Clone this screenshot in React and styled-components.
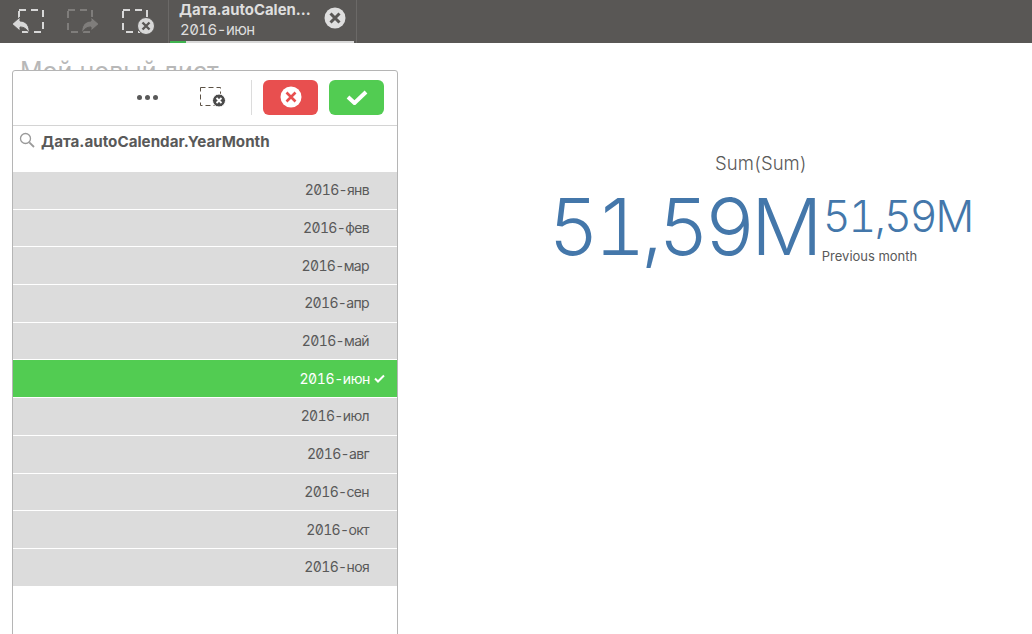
import React from 'react';
import styled, { createGlobalStyle } from 'styled-components';

const GlobalStyle = createGlobalStyle`
  html, body { margin: 0; padding: 0; height: 100%; overflow: hidden; background: #fff; }
  body { font-family: "Inter", "Noto Sans", sans-serif; }
`;

const Page = styled.div`
  width: 1032px;
  height: 634px;
  display: flex;
  flex-direction: column;
  overflow: hidden;
`;

const TopBar = styled.div`
  height: 43px;
  background: #595755;
  display: flex;
  align-items: stretch;
  flex: none;
`;

const ToolIcons = styled.div`
  width: 168px;
  display: flex;
  align-items: center;
  padding-left: 11px;
  gap: 17px;
  box-sizing: border-box;
`;

const ToolIcon = styled.svg`
  width: 38px;
  height: 43px;
  display: block;
`;

const SelectionTab = styled.div`
  width: 189px;
  box-sizing: border-box;
  border-left: 1px solid #6b6967;
  border-right: 1px solid #6b6967;
  position: relative;
  padding: 2px 0 0 11px;
  color: #dedede;
`;

const TabTitle = styled.div`
  font-size: 14.9px;
  font-weight: 700;
  line-height: 17px;
  white-space: nowrap;
  margin-left: -1px;
`;

const TabValue = styled.div`
  font-size: 15px;
  line-height: 21px;
  font-feature-settings: "zero", "tnum";
  letter-spacing: -0.55px;
`;

const TabClose = styled.svg`
  position: absolute;
  left: 155px;
  top: 7px;
  width: 22px;
  height: 22px;
`;

const TabBar = styled.div`
  position: absolute;
  left: 1px;
  right: 2px;
  bottom: 0;
  height: 2px;
  background: #d9d9d9;
`;

const TabBarFill = styled.div`
  width: 16px;
  height: 100%;
  background: #3fb34f;
`;

const Sheet = styled.div`
  flex: 1;
  position: relative;
  display: flex;
  justify-content: flex-end;
`;

const SheetTitle = styled.div`
  position: absolute;
  left: 20px;
  top: 13px;
  font-size: 25px;
  line-height: 30px;
  color: #b8b8b8;
`;

const ListPanel = styled.div`
  position: absolute;
  left: 12px;
  top: 27px;
  width: 386px;
  bottom: -4px;
  box-sizing: border-box;
  background: #fff;
  border: 1px solid #b5b5b5;
  border-radius: 3px;
`;

const PanelToolbar = styled.div`
  height: 55px;
  box-sizing: border-box;
  border-bottom: 1px solid #d4d4d4;
  display: flex;
  align-items: center;
  justify-content: flex-end;
  padding: 0 13px 2px 0;
`;

const MoreDots = styled.div`
  display: flex;
  gap: 3px;
  margin-right: 41px;
`;

const Dot = styled.span`
  width: 5px;
  height: 5px;
  border-radius: 50%;
  background: #595959;
`;

const ClearIcon = styled.svg`
  width: 28px;
  height: 22px;
  display: block;
`;

const Divider = styled.div`
  width: 1px;
  height: 35px;
  background: #dcdcdc;
  margin: 0 11px 0 24px;
`;

const ActionButton = styled.div`
  width: 55px;
  height: 35px;
  border-radius: 6px;
  background: ${({ $kind }) => ($kind === 'cancel' ? '#e84f4f' : '#52cc52')};
  margin-left: ${({ $kind }) => ($kind === 'cancel' ? '0' : '11px')};
  display: flex;
  align-items: center;
  justify-content: center;
`;

const SearchRow = styled.div`
  height: 46px;
  box-sizing: border-box;
  display: flex;
  align-items: flex-start;
  padding: 6px 0 0 6px;
  gap: 6px;
`;

const SearchLabel = styled.div`
  font-size: 15.2px;
  font-weight: 700;
  line-height: 20px;
  color: #595959;
`;

const Rows = styled.div`
  display: flex;
  flex-direction: column;
`;

const Row = styled.div`
  height: 37.7px;
  box-sizing: border-box;
  border-bottom: 1px solid #fff;
  background: ${({ $selected }) => ($selected ? '#52cc52' : '#dcdcdc')};
  color: ${({ $selected }) => ($selected ? '#fff' : '#595959')};
  display: flex;
  align-items: center;
  justify-content: flex-end;
  padding: 0 ${({ $selected }) => ($selected ? '12px' : '28px')} 1px 0;
  font-size: 14px;
  font-feature-settings: "zero", "tnum";
  letter-spacing: ${({ $selected }) => ($selected ? '-0.4px' : '-0.65px')};
  gap: 4px;
`;

const Kpi = styled.div`
  width: 600px;
  display: flex;
  flex-direction: column;
  align-items: stretch;
  padding-top: 107px;
  box-sizing: border-box;
  font-feature-settings: "tnum";
`;

const KpiTitle = styled.div`
  font-size: 18.5px;
  line-height: 26px;
  color: #595959;
  text-align: center;
  padding-left: 58px;
  font-weight: 300;
`;

const KpiValues = styled.div`
  display: flex;
  align-items: flex-start;
  padding-left: 116px;
`;

const MainValue = styled.div`
  font-size: 79px;
  font-weight: 300;
  line-height: 96px;
  margin-top: 2px;
  color: #4477aa;
  letter-spacing: -4.5px;
`;

const SecondaryColumn = styled.div`
  display: flex;
  flex-direction: column;
  padding: 15px 0 0 4px;
`;

const SecondaryValue = styled.div`
  font-size: 43px;
  font-weight: 300;
  line-height: 50px;
  color: #4477aa;
  margin-left: 1px;
  letter-spacing: -2px;
`;

const SecondaryLabel = styled.div`
  font-size: 13px;
  line-height: 18px;
  color: #595959;
  margin-top: 6px;
`;

const months = ['янв', 'фев', 'мар', 'апр', 'май', 'июн', 'июл', 'авг', 'сен', 'окт', 'ноя'];

export default function App() {
  return (
    <Page>
      <GlobalStyle />
      <TopBar>
        <ToolIcons>
          <ToolIcon viewBox="0 0 38 43">
            <rect x="8" y="10" width="24" height="22" fill="none" stroke="#d8d8d8" strokeWidth="2" strokeDasharray="7 5" />
            <path d="M1 24 L9 17 V21 C15 21 19 26 18 33 C16 29 13 27 9 27 V31 Z" fill="#d8d8d8" stroke="#595755" strokeWidth="1" />
          </ToolIcon>
          <ToolIcon viewBox="0 0 38 43">
            <rect x="2" y="10" width="24" height="22" fill="none" stroke="#7f7d7b" strokeWidth="2" strokeDasharray="7 5" />
            <path d="M33 24 L25 17 V21 C19 21 15 26 16 33 C18 29 21 27 25 27 V31 Z" fill="#7f7d7b" stroke="#595755" strokeWidth="1" />
          </ToolIcon>
          <ToolIcon viewBox="0 0 38 43">
            <rect x="2" y="10" width="24" height="22" fill="none" stroke="#d8d8d8" strokeWidth="2" strokeDasharray="7 5" />
            <circle cx="25" cy="26" r="8.5" fill="#d8d8d8" stroke="#595755" strokeWidth="1" />
            <path d="M21.5 22.5 L28.5 29.5 M28.5 22.5 L21.5 29.5" stroke="#595755" strokeWidth="2.4" />
          </ToolIcon>
        </ToolIcons>
        <SelectionTab>
          <TabTitle>Дата.autoCalen...</TabTitle>
          <TabValue>2016-июн</TabValue>
          <TabClose viewBox="0 0 22 22">
            <circle cx="11" cy="11" r="10.5" fill="#dedede" />
            <path d="M6.5 6.5 L15.5 15.5 M15.5 6.5 L6.5 15.5" stroke="#595755" strokeWidth="3" />
          </TabClose>
          <TabBar>
            <TabBarFill />
          </TabBar>
        </SelectionTab>
      </TopBar>
      <Sheet>
        <SheetTitle>Мой новый лист</SheetTitle>
        <ListPanel>
          <PanelToolbar>
            <MoreDots>
              <Dot />
              <Dot />
              <Dot />
            </MoreDots>
            <ClearIcon viewBox="0 0 28 22">
              <rect x="1.5" y="1.5" width="20" height="18" fill="none" stroke="#5c5246" strokeWidth="1" strokeDasharray="5 3" />
              <circle cx="20" cy="14.5" r="6.5" fill="#4a4a4a" stroke="#fff" strokeWidth="1" />
              <path d="M17.5 12 L22.5 17 M22.5 12 L17.5 17" stroke="#fff" strokeWidth="1.8" />
            </ClearIcon>
            <Divider />
            <ActionButton $kind="cancel">
              <svg width="22" height="22" viewBox="0 0 22 22">
                <circle cx="11" cy="11" r="10.5" fill="#fff" />
                <path d="M6.5 6.5 L15.5 15.5 M15.5 6.5 L6.5 15.5" stroke="#e84f4f" strokeWidth="2.6" />
              </svg>
            </ActionButton>
            <ActionButton $kind="confirm">
              <svg width="22" height="16" viewBox="0 0 22 16">
                <path d="M2 8 L8.5 14 L20 3" fill="none" stroke="#fff" strokeWidth="4" />
              </svg>
            </ActionButton>
          </PanelToolbar>
          <SearchRow>
            <svg width="16" height="16" viewBox="0 0 16 16">
              <circle cx="6.5" cy="6.5" r="5" fill="none" stroke="#9a9a9a" strokeWidth="1.3" />
              <path d="M10.3 10.3 L15 15" stroke="#9a9a9a" strokeWidth="1.8" />
            </svg>
            <SearchLabel>Дата.autoCalendar.YearMonth</SearchLabel>
          </SearchRow>
          <Rows>
            {months.map(m => (
              <Row key={m} $selected={m === 'июн'}>
                2016-{m}
                {m === 'июн' && (
                  <svg width="11" height="9" viewBox="0 0 11 9">
                    <path d="M1 4.5 L4 7.5 L10 1.5" fill="none" stroke="#fff" strokeWidth="2" />
                  </svg>
                )}
              </Row>
            ))}
          </Rows>
        </ListPanel>
        <Kpi>
          <KpiTitle>Sum(Sum)</KpiTitle>
          <KpiValues>
            <MainValue>51,59M</MainValue>
            <SecondaryColumn>
              <SecondaryValue>51,59M</SecondaryValue>
              <SecondaryLabel>Previous month</SecondaryLabel>
            </SecondaryColumn>
          </KpiValues>
        </Kpi>
      </Sheet>
    </Page>
  );
}
